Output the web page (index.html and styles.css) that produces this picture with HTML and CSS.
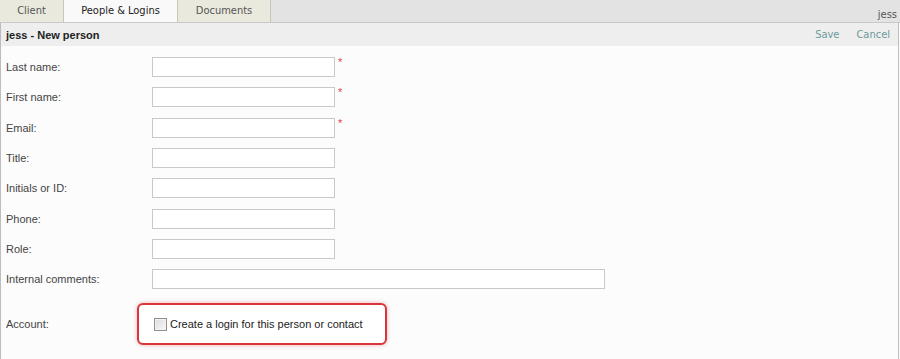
FILE: index.html
```html
<!DOCTYPE html>
<html lang="en">
  <head>
    <meta charset="UTF-8" />
    <title>jess - New person</title>
    <link rel="stylesheet" href="styles.css">
  </head>
  <body>
    <div class="topbar">
      <div class="tabs">
        <div class="tab tab-client">Client</div>
        <div class="tab active">People &amp; Logins</div>
        <div class="tab tab-docs">Documents</div>
      </div>
      <span class="user">jess</span>
    </div>

    <div class="panel">
      <div class="panel-header">
        <h1>jess - New person</h1>
        <div class="actions">
          <a href="#">Save</a>
          <a href="#">Cancel</a>
        </div>
      </div>

      <form class="person-form">
        <div class="row">
          <label for="last-name">Last name:</label>
          <input type="text" id="last-name" />
          <span class="req">*</span>
        </div>
        <div class="row">
          <label for="first-name">First name:</label>
          <input type="text" id="first-name" />
          <span class="req">*</span>
        </div>
        <div class="row">
          <label for="email">Email:</label>
          <input type="text" id="email" />
          <span class="req">*</span>
        </div>
        <div class="row">
          <label for="title">Title:</label>
          <input type="text" id="title" />
        </div>
        <div class="row">
          <label for="initials">Initials or ID:</label>
          <input type="text" id="initials" />
        </div>
        <div class="row">
          <label for="phone">Phone:</label>
          <input type="text" id="phone" />
        </div>
        <div class="row">
          <label for="role">Role:</label>
          <input type="text" id="role" />
        </div>
        <div class="row">
          <label for="comments">Internal comments:</label>
          <input type="text" id="comments" class="wide" />
        </div>
        <div class="row account-row">
          <label>Account:</label>
          <div class="highlight">
            <input type="checkbox" id="create-login" />
            <label for="create-login" class="check-label">Create a login for this person or contact</label>
          </div>
        </div>
      </form>
    </div>
  </body>
</html>
```

FILE: styles.css
```css
body {
  margin: 0;
  padding: 0;
  font-family: "Liberation Sans", Arial, sans-serif;
  font-size: 11px;
  color: #333;
  background: #fcfcfc;
}

.topbar {
  display: flex;
  justify-content: space-between;
  align-items: stretch;
  height: 22px;
  background: #e3e3e3;
  border-bottom: 1px solid #c9c9c9;
}

.tabs {
  display: flex;
}

.tab {
  font-family: "DejaVu Sans Condensed", "DejaVu Sans", sans-serif;
  font-size: 11px;
  color: #555;
  background: #e9e9dd;
  border-right: 1px solid #c6c6bc;
  line-height: 22px;
  text-align: center;
}

.tab-client {
  width: 63px;
}

.tab.active {
  width: 113px;
  background: #f9f9f9;
  color: #222;
}

.tab-docs {
  width: 92px;
}

.user {
  font-family: "DejaVu Sans Condensed", "DejaVu Sans", sans-serif;
  font-size: 11px;
  color: #555;
  align-self: flex-end;
  padding-right: 3px;
  line-height: 14px;
}

.panel {
  width: 897px;
  height: 336px;
  border-left: 1px solid #bdbdbd;
  border-right: 1px solid #bdbdbd;
  background: #fcfcfc;
}

.panel-header {
  display: flex;
  justify-content: space-between;
  align-items: center;
  height: 23px;
  background: #eeeeee;
  padding: 0 8px 0 5px;
}

.panel-header h1 {
  margin: 0;
  font-size: 11px;
  font-weight: bold;
  color: #222;
}

.actions {
  display: flex;
  gap: 17px;
}

.actions a {
  font-family: "DejaVu Sans Condensed", "DejaVu Sans", sans-serif;
  font-size: 11px;
  color: #6c9a9a;
  text-decoration: none;
}

.person-form {
  padding: 6px 0 0 5px;
}

.row {
  display: flex;
  align-items: center;
  height: 30.3px;
}

.row > label {
  width: 146px;
  color: #444;
}

.row input[type="text"] {
  width: 183px;
  height: 20px;
  box-sizing: border-box;
  margin: 0;
  border: 1px solid #c9c9c9;
  background: #fff;
  padding: 2px 4px;
}

.row input.wide {
  width: 453px;
}

.req {
  align-self: flex-start;
  margin: 4px 0 0 3px;
  color: #e0405a;
  font-size: 11px;
}

.account-row {
  height: 44px;
  margin-top: 8px;
}

.highlight {
  display: flex;
  align-items: center;
  margin-left: -15px;
  width: 231px;
  height: 38px;
  padding-left: 15px;
  border: 2px solid #d9353a;
  border-radius: 6px;
  box-shadow: 0 0 4px rgba(200, 40, 40, 0.35);
  background: #fff;
}

.highlight input[type="checkbox"] {
  appearance: none;
  width: 13px;
  height: 13px;
  margin: 0 3px 0 0;
  border: 1px solid #8f8f8f;
  background: linear-gradient(135deg, #dcdcdc, #f8f8f8);
  box-shadow: inset 0 0 0 1px #f2f2f2;
}

.check-label {
  font-size: 11px;
  color: #222;
}
```
